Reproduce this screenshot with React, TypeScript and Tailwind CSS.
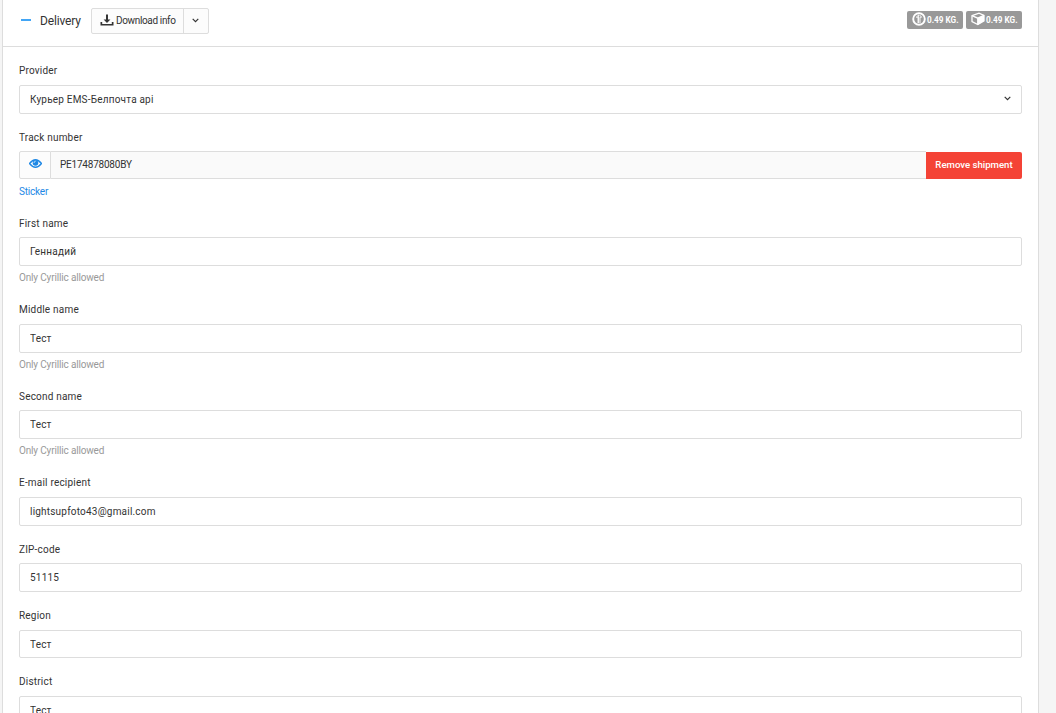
import type { ReactNode } from 'react'

const fields = [
  { id: 'first-name', label: 'First name', value: 'Геннадий', help: 'Only Cyrillic allowed' },
  { id: 'middle-name', label: 'Middle name', value: 'Тест', help: 'Only Cyrillic allowed' },
  { id: 'second-name', label: 'Second name', value: 'Тест', help: 'Only Cyrillic allowed' },
  { id: 'email', label: 'E-mail recipient', value: 'lightsupfoto43@gmail.com' },
  { id: 'zip', label: 'ZIP-code', value: '51115' },
  { id: 'region', label: 'Region', value: 'Тест' },
  { id: 'district', label: 'District', value: 'Тест' },
]

function Chevron() {
  return (
    <svg width="7" height="5" viewBox="0 0 7 5" fill="none" stroke="#333" strokeWidth="1.2">
      <path d="M0.7 0.9 L3.5 3.6 L6.3 0.9" />
    </svg>
  )
}

function Label({ htmlFor, children }: { htmlFor: string; children: ReactNode }) {
  return (
    <label htmlFor={htmlFor} className="block h-4 mb-[5.6px] leading-4 tracking-[0.2px]">
      {children}
    </label>
  )
}

function Badge({ children }: { children: ReactNode }) {
  return (
    <span className="flex h-[18px] w-14 items-center rounded-[2px] bg-[#999] pl-[5px] text-[8.2px] font-bold text-white">
      {children}
      <span className="ml-[1px] whitespace-nowrap">0.49 KG.</span>
    </span>
  )
}

export default function App() {
  return (
    <div className="h-[713px] w-full overflow-hidden bg-[#f5f5f5] pl-[2px] font-[Roboto,sans-serif] text-[10px] text-[#333]">
      <div className="h-[760px] w-[1037px] border-x border-[#ddd] bg-white">
        <div className="flex h-[47px] items-start justify-between border-b border-[#ddd] pr-4 pl-[18px]">
          <div className="flex pt-2">
            <span className="mt-[11px] h-[2px] w-[10px] bg-[#42a5f5]" />
            <h6 className="ml-[9px] w-[51px] text-[12px] leading-[26px] tracking-[-0.15px]">Delivery</h6>
            <div className="flex h-[26px] rounded-[2px] border border-[#ddd] bg-[#fcfcfc]">
              <button className="flex w-[91px] items-center pl-2 whitespace-nowrap">
                <svg className="-mt-[2px] mr-[2px] shrink-0" width="14" height="12" viewBox="0 0 14 12" fill="#333">
                  <path d="M6 0.5h2v5h2.4L7 9 3.6 5.5H6z" />
                  <path d="M0.5 8h1.7v2h9.6V8h1.7v3.6h-13z" />
                </svg>
                <span className="-mt-px tracking-[-0.35px]">Download info</span>
              </button>
              <button className="flex w-[25px] items-center justify-center border-l border-[#ddd] pr-[2px] pb-px">
                <Chevron />
              </button>
            </div>
          </div>
          <div className="flex gap-[3px] pt-[11px]">
            <Badge>
              <svg className="-mt-[3px] shrink-0" width="14" height="14" viewBox="0 0 14 14" fill="none" stroke="#fff">
                <circle cx="7" cy="7" r="5.8" strokeWidth="1.9" />
                <path d="M6 11V5.2H4.3L6.6 3v8M8 11V5.2h1.7L7.6 3" strokeWidth="0.9" />
              </svg>
            </Badge>
            <Badge>
              <svg className="-mt-[3px] shrink-0" width="14" height="14" viewBox="0 0 14 14">
                <path d="M1 3.7 8 1.1l5 2.2v5.6l-6.2 3.7L1 9.6z" fill="none" stroke="#fff" strokeWidth="1.3" />
                <path d="M6.8 6.2 13 3.5v5.6l-6.2 3.6z" fill="#fff" />
                <path d="M1 3.7l5.8 2.5L13 3.4M6.8 6v6.5" fill="none" stroke="#fff" strokeWidth="1.4" />
              </svg>
            </Badge>
          </div>
        </div>

        <div className="px-4 pt-[16.2px]">
          <div className="mb-4">
            <Label htmlFor="provider">Provider</Label>
            <button
              id="provider"
              className="flex h-[28.8px] w-full items-center justify-between rounded-[2px] border border-[#ddd] px-[10px] pt-px tracking-[0.2px]"
            >
              Курьер EMS-Белпочта api
              <span className="-mt-[3px]">
                <Chevron />
              </span>
            </button>
          </div>

          <div className="h-[86px]">
            <Label htmlFor="track">Track number</Label>
            <div className="flex h-7">
              <span className="flex w-8 items-center justify-center rounded-l-[2px] border border-[#ddd] bg-[#fcfcfc]">
                <svg className="-mt-[3px]" width="13" height="9" viewBox="0 0 13 9">
                  <path d="M0.5 4.5Q6.5-3 12.5 4.5 6.5 12 0.5 4.5z" fill="none" stroke="#1e88e5" strokeWidth="1.3" />
                  <circle cx="6.5" cy="4" r="2.8" fill="#1e88e5" />
                  <path d="M5 3.8Q5 2.5 6.5 2.4" fill="none" stroke="#fff" strokeWidth="0.8" />
                </svg>
              </span>
              <input
                id="track"
                className="min-w-0 flex-1 border-y border-[#ddd] bg-[#fafafa] pb-px pl-[9px] tracking-[-0.22px]"
                defaultValue="PE174878080BY"
                readOnly
              />
              <button className="mt-px w-24 rounded-r-[2px] bg-[#f44336] pb-px text-[9.6px] font-medium whitespace-nowrap text-white">
                Remove shipment
              </button>
            </div>
            <a className="mt-[5px] block leading-4 tracking-[-0.2px] text-[#1e88e5]">Sticker</a>
          </div>

          {fields.map((field) => (
            <div key={field.id} className="mb-4">
              <Label htmlFor={field.id}>{field.label}</Label>
              <input
                id={field.id}
                className="block h-[28.8px] w-full rounded-[2px] border border-[#ddd] px-[10px] tracking-[0.2px]"
                defaultValue={field.value}
              />
              {field.help && (
                <span className="mt-1 block h-[16.2px] leading-4 tracking-[-0.16px] text-[#999]">
                  {field.help}
                </span>
              )}
            </div>
          ))}
        </div>
      </div>
    </div>
  )
}
